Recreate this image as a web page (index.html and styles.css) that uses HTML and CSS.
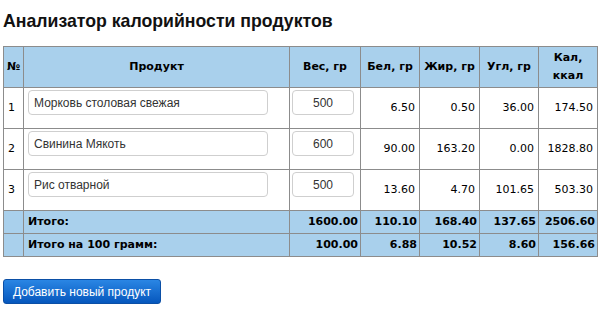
FILE: index.html
```html
<!DOCTYPE html>
<html lang="ru">
<head>
    <meta charset="UTF-8">
    <meta name="viewport" content="width=device-width, initial-scale=1.0">
    <title>Анализатор калорийности продуктов</title>
    <link rel="stylesheet" href="styles.css">
</head>
<body>

<h2 class="title">Анализатор калорийности продуктов</h2>

<table class="calc">
    <colgroup>
        <col class="col-num">
        <col class="col-name">
        <col class="col-weight">
        <col class="col-val">
        <col class="col-wide">
        <col class="col-val">
        <col class="col-val">
    </colgroup>
    <thead>
        <tr>
            <th>№</th>
            <th>Продукт</th>
            <th>Вес, гр</th>
            <th>Бел, гр</th>
            <th>Жир, гр</th>
            <th>Угл, гр</th>
            <th>Кал, ккал</th>
        </tr>
    </thead>
    <tbody id="products">
        <tr>
            <td>1</td>
            <td><input class="name-input" type="text" value="Морковь столовая свежая"></td>
            <td class="weight"><input class="weight-input" type="text" value="500"></td>
            <td class="num">6.50</td>
            <td class="num">0.50</td>
            <td class="num">36.00</td>
            <td class="num">174.50</td>
        </tr>
        <tr>
            <td>2</td>
            <td><input class="name-input" type="text" value="Свинина Мякоть"></td>
            <td class="weight"><input class="weight-input" type="text" value="600"></td>
            <td class="num">90.00</td>
            <td class="num">163.20</td>
            <td class="num">0.00</td>
            <td class="num">1828.80</td>
        </tr>
        <tr>
            <td>3</td>
            <td><input class="name-input" type="text" value="Рис отварной"></td>
            <td class="weight"><input class="weight-input" type="text" value="500"></td>
            <td class="num">13.60</td>
            <td class="num">4.70</td>
            <td class="num">101.65</td>
            <td class="num">503.30</td>
        </tr>
    </tbody>
    <tfoot>
        <tr>
            <td></td>
            <td>Итого:</td>
            <td class="num">1600.00</td>
            <td class="num">110.10</td>
            <td class="num">168.40</td>
            <td class="num">137.65</td>
            <td class="num">2506.60</td>
        </tr>
        <tr>
            <td></td>
            <td>Итого на 100 грамм:</td>
            <td class="num">100.00</td>
            <td class="num">6.88</td>
            <td class="num">10.52</td>
            <td class="num">8.60</td>
            <td class="num">156.66</td>
        </tr>
    </tfoot>
</table>

<button class="add-btn" type="button">Добавить новый продукт</button>

</body>
</html>
```

FILE: styles.css
```css
body {
    margin: 0;
    padding: 0 3px;
    font-family: "DejaVu Sans", Verdana, sans-serif;
    font-size: 11px;
    color: #000;
    background: #fff;
}
.title {
    margin: 10px 0 14px;
    font-family: "Liberation Sans", Arial, sans-serif;
    font-size: 17.7px;
    font-weight: bold;
    line-height: 22px;
    color: #111;
}
.calc {
    width: 594px;
    table-layout: fixed;
    border-collapse: collapse;
    border: 1px solid #8c8c8c;
}
.col-num { width: 20px; }
.col-name { width: 266px; }
.col-weight { width: 71px; }
.col-val { width: 59px; }
.col-wide { width: 60px; }
th, td {
    border: 1px solid #8c8c8c;
    padding: 2px 4px;
    line-height: 18px;
    vertical-align: middle;
}
th {
    background-color: #a9d0ec;
    font-weight: bold;
    text-align: center;
    height: 35px;
    padding: 2px 1px;
}
td.num {
    text-align: right;
}
td.weight {
    padding-left: 2px;
}
tfoot td {
    background-color: #a9d0ec;
    font-weight: bold;
}
tfoot td.num {
    padding: 2px 2px;
}
tfoot td:first-child {
    padding: 0;
}
.name-input,
.weight-input {
    display: block;
    box-sizing: border-box;
    height: 25px;
    margin: 0 0 11px;
    padding: 0 5px;
    border: 1px solid #cfcfcf;
    border-radius: 4px;
    font-family: "Liberation Sans", Arial, sans-serif;
    font-size: 12px;
    color: #333;
    background: #fff;
}
.name-input {
    width: 240px;
}
.weight-input {
    width: 62px;
    text-align: center;
}
.add-btn {
    display: block;
    margin-top: 22px;
    width: 158px;
    height: 25px;
    padding: 0;
    border: 1px solid #0b4fa6;
    border-radius: 3px;
    background: linear-gradient(#2a86e4, #0657bd);
    color: #fff;
    font-family: "Liberation Sans", Arial, sans-serif;
    font-size: 12px;
    cursor: pointer;
}
```
